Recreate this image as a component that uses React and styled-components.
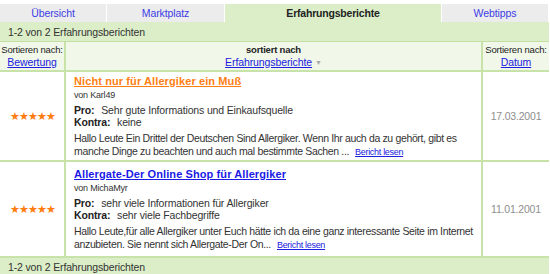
import React from "react";
import styled, { createGlobalStyle } from "styled-components";

const GlobalStyle = createGlobalStyle`
    body {
        margin: 0;
        background: #fff;
        font-family: "Liberation Sans", Arial, sans-serif;
        font-size: 10px;
        color: #333;
    }
`;

const Page = styled.div`
    width: 549px;
`;

const Tabs = styled.div`
    display: flex;
    gap: 1px;
    padding-top: 4px;
`;

const Tab = styled.div`
    width: ${(props) => props.width}px;
    height: 18px;
    display: flex;
    align-items: center;
    justify-content: center;
    font-size: 10.5px;
    letter-spacing: ${(props) => (props.active ? "-0.2px" : "-0.1px")};
    background: ${(props) => (props.active ? "#dbeec8" : "#ececec")};
    color: ${(props) => (props.active ? "#222" : "#3c3ce6")};
    font-weight: ${(props) => (props.active ? "bold" : "normal")};
`;

const Bar = styled.div`
    height: ${(props) => props.h || 19}px;
    display: flex;
    align-items: center;
    padding-left: 8px;
    background: #dbeec8;
    border-bottom: ${(props) => (props.bottom ? "none" : "1px solid #c2e0a2")};
    font-size: 10.5px;
    letter-spacing: -0.15px;
    color: #333;
`;

const Row = styled.div`
    display: grid;
    grid-template-columns: 66px 1fr 66px;
    height: ${(props) => props.h}px;
    border-bottom: 2px solid #c8e3aa;
    background: ${(props) => (props.head ? "#f1f8e9" : "#fff")};
`;

const Cell = styled.div`
    border-right: ${(props) => (props.last ? "none" : "2px solid #c8e3aa")};
    display: flex;
    flex-direction: column;
    align-items: ${(props) => (props.left ? "flex-start" : "center")};
    justify-content: center;
    text-align: ${(props) => (props.left ? "left" : "center")};
    padding: ${(props) => props.pad || "0"};
    font-size: 9.5px;
    letter-spacing: -0.2px;
    line-height: 12px;
    white-space: ${(props) => (props.left ? "normal" : "nowrap")};
    color: #222;
`;

const SortLink = styled.a`
    color: #2020e0;
    text-decoration: underline;
    font-size: 10.5px;
    letter-spacing: -0.1px;
    line-height: 13px;
`;

const Arrow = styled.span`
    display: inline-block;
    color: #aaa;
    font-size: 7px;
    margin-left: 3px;
    vertical-align: 1px;
`;

const Title = styled.a`
    color: ${(props) => props.color};
    font-weight: bold;
    font-size: 11px;
    letter-spacing: 0.1px;
    text-decoration: underline;
    line-height: 14px;
`;

const Author = styled.div`
    font-size: 9px;
    letter-spacing: -0.2px;
    color: #333;
    margin-top: 1px;
    margin-bottom: 3px;
`;

const ProLine = styled.div`
    font-size: 10.5px;
    letter-spacing: -0.15px;
    line-height: 12px;
    color: #333;

    b {
        color: #222;
        margin-right: 4px;
    }
`;

const Text = styled.div`
    margin-top: 4px;
    font-size: 10.5px;
    letter-spacing: -0.35px;
    line-height: 13px;
    color: #333;
`;

const ReadMore = styled.a`
    color: #2020e0;
    font-size: 9px;
    letter-spacing: -0.3px;
    text-decoration: underline;
    margin-left: 6px;
`;

const Stars = styled.div`
    color: #ff7c10;
    font-size: 11px;
    letter-spacing: -1px;
`;

const Date = styled.div`
    font-size: 10.5px;
    letter-spacing: -0.2px;
    color: #8e8e8e;
`;

const reviews = [
    {
        title: "Nicht nur für Allergiker ein Muß",
        color: "#ff7f14",
        author: "Karl49",
        pro: "Sehr gute Informations und Einkaufsquelle",
        kontra: "keine",
        text: "Hallo Leute Ein Drittel der Deutschen Sind Allergiker. Wenn Ihr auch da zu gehört, gibt es manche Dinge zu beachten und auch mal bestimmte Sachen ...",
        date: "17.03.2001",
        h: 88,
    },
    {
        title: "Allergate-Der Online Shop für Allergiker",
        color: "#1a1ae6",
        author: "MichaMyr",
        pro: "sehr viele Informationen für Allergiker",
        kontra: "sehr viele Fachbegriffe",
        text: "Hallo Leute,für alle Allergiker unter Euch hätte ich da eine ganz interessante Seite im Internet anzubieten. Sie nennt sich Allergate-Der On...",
        date: "11.01.2001",
        h: 94,
    },
];

const App = () => {
    return (
        <Page>
            <GlobalStyle />
            <Tabs>
                <Tab width={106}>Übersicht</Tab>
                <Tab width={117}>Marktplatz</Tab>
                <Tab width={216} active>Erfahrungsberichte</Tab>
                <Tab width={106}>Webtipps</Tab>
            </Tabs>
            <Bar>1-2 von 2 Erfahrungsberichten</Bar>
            <Row head h={28}>
                <Cell>
                    Sortieren nach:
                    <SortLink href="#">Bewertung</SortLink>
                </Cell>
                <Cell>
                    <b>sortiert nach</b>
                    <SortLink href="#">
                        Erfahrungsberichte
                        <Arrow>▼</Arrow>
                    </SortLink>
                </Cell>
                <Cell last>
                    Sortieren nach:
                    <SortLink href="#">Datum</SortLink>
                </Cell>
            </Row>
            {reviews.map((r, i) => (
                <Row key={i} h={r.h}>
                    <Cell>
                        <Stars>★★★★★</Stars>
                    </Cell>
                    <Cell left pad="0 2px 0 8px">
                        <Title href="#" color={r.color}>{r.title}</Title>
                        <Author>von {r.author}</Author>
                        <ProLine><b>Pro:</b> {r.pro}</ProLine>
                        <ProLine><b>Kontra:</b> {r.kontra}</ProLine>
                        <Text>
                            {r.text}
                            <ReadMore href="#">Bericht lesen</ReadMore>
                        </Text>
                    </Cell>
                    <Cell last>
                        <Date>{r.date}</Date>
                    </Cell>
                </Row>
            ))}
            <Bar bottom h={18}>1-2 von 2 Erfahrungsberichten</Bar>
        </Page>
    );
};

export default App;
